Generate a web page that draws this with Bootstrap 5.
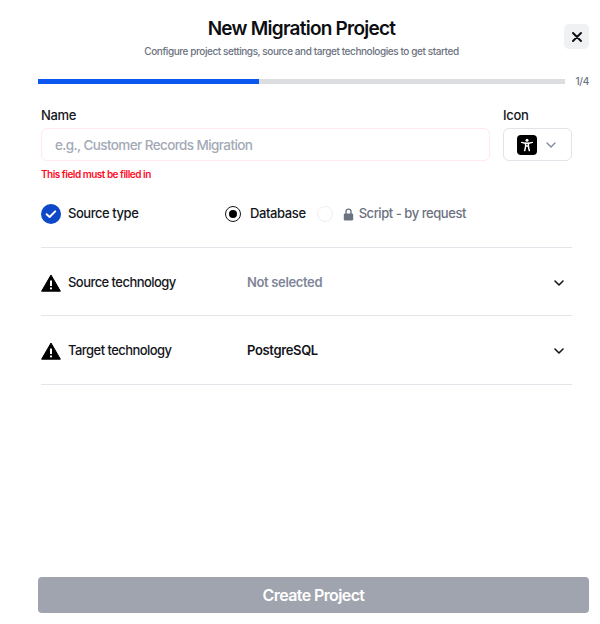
<!DOCTYPE html>
<html lang="en">
<head>
  <meta charset="UTF-8" />
  <meta name="viewport" content="width=device-width, initial-scale=1.0" />
  <title>New Migration Project</title>
  <link href="https://cdn.jsdelivr.net/npm/bootstrap@5.3.0/dist/css/bootstrap.min.css" rel="stylesheet" />
  <style>
    html, body { height: 100%; }
    body { font-family: Inter, "Liberation Sans", sans-serif; color: #14161b; background: #fff; overflow: hidden; }
    .project-page { height: 624px; padding: 0 11px 11px 38px; }
    .project-head { height: 74px; padding: 17px 24px 0 0; }
    .project-title { font-size: 19px; font-weight: 600; line-height: 24px; letter-spacing: -0.75px; margin: 0; color: #0c0e12; }
    .project-sub { font-size: 10px; font-weight: 500; line-height: 14px; margin: 3px 0 0; color: #6b7280; letter-spacing: -0.42px; }
    .close-btn { top: 24px; right: 11px; width: 25px; height: 25px; background: #f0f1f3; border: 0; border-radius: 5px; padding: 0; }
    .step-row { height: 14px; }
    .step-track { height: 5px; background: #dcdde1; border-radius: 0; flex: 1 1 auto; }
    .step-track .progress-bar { background: #0b57f0; }
    .step-count { width: 24px; text-align: right; font-size: 10px; font-weight: 500; color: #6b7280; letter-spacing: -0.3px; }
    .project-form { padding: 0 17px 0 3px; }
    .name-block { margin-top: 19px; }
    .name-col { margin-right: 5px; }
    .field-label { font-size: 13px; font-weight: 500; line-height: 16px; margin: 0 0 5px; letter-spacing: -0.3px; }
    .name-input { height: 33px; border: 1px solid #ffe9ec; border-radius: 6px; font-size: 13.5px; font-weight: 500; padding: 0 13px; letter-spacing: -0.6px; }
    .name-input::placeholder { color: #a3a9b6; }
    .icon-pick { width: 69px; height: 33px; border: 1px solid #e2e4ea; border-radius: 6px; background: #fff; padding: 0 0 0 13px; }
    .icon-tile { width: 20px; height: 20px; background: #000; border-radius: 4px; }
    .icon-caret { margin-left: 1px; }
    .field-error { font-size: 10px; font-weight: 600; line-height: 14px; color: #ff0a1f; margin-top: 6px; letter-spacing: -0.5px; }
    .type-row { height: 67px; border-bottom: 1px solid #e4e5ea; }
    .row-label { font-size: 13px; font-weight: 500; letter-spacing: -0.45px; width: 164px; padding-left: 7px; }
    .radio-on, .radio-off { width: 16px; height: 16px; border-radius: 50%; flex: none; }
    .radio-on { border: 1.5px solid #14161b; padding: 2.5px; }
    .radio-on span { display: block; width: 8px; height: 8px; border-radius: 50%; background: #000; }
    .radio-off { border: 1px solid #eceef1; margin-left: 11px; }
    .radio-text { font-size: 13px; font-weight: 500; letter-spacing: -0.4px; margin-left: 9px; }
    .radio-text.locked { color: #6b7280; margin-left: 5px; letter-spacing: -0.45px; }
    .lock-glyph { margin-left: 10px; }
    .tech-row { height: 68px; border-bottom: 1px solid #e4e5ea; padding-top: 2px; }
    .tech-row + .tech-row { height: 69px; }
    .tech-name { width: 186px; font-size: 13px; font-weight: 500; letter-spacing: -0.55px; padding-left: 7px; }
    .tech-value { font-size: 13px; font-weight: 600; letter-spacing: -0.35px; }
    .tech-value.empty { color: #80869a; }
    .create-btn { height: 36px; background: #9fa4af; border: 0; border-radius: 4px; color: #fff; font-size: 16px; font-weight: 600; letter-spacing: -0.6px; }
    .create-btn:disabled { background: #9fa4af; color: #fff; opacity: 1; }
  </style>
</head>
<body>
  <div class="project-page d-flex flex-column position-relative">
    <div class="project-head text-center">
      <h1 class="project-title">New Migration Project</h1>
      <p class="project-sub">Configure project settings, source and target technologies to get started</p>
      <button class="close-btn position-absolute d-flex align-items-center justify-content-center" type="button" aria-label="Close">
        <svg width="10" height="10" viewBox="0 0 10 10"><path d="M1 1l8 8M9 1l-8 8" stroke="#0c0e12" stroke-width="1.9" stroke-linecap="round"/></svg>
      </button>
    </div>

    <div class="step-row d-flex align-items-center">
      <div class="progress step-track">
        <div class="progress-bar" style="width: 42%"></div>
      </div>
      <div class="step-count">1/4</div>
    </div>

    <form class="project-form flex-grow-1 d-flex flex-column">
      <div class="name-block d-flex gap-2 justify-content-between">
        <div class="name-col flex-grow-1">
          <label class="field-label d-block">Name</label>
          <input type="text" class="form-control name-input" placeholder="e.g., Customer Records Migration" />
          <div class="field-error">This field must be filled in</div>
        </div>
        <div>
          <label class="field-label d-block">Icon</label>
          <button type="button" class="icon-pick d-flex align-items-center gap-2">
            <span class="icon-tile d-flex align-items-center justify-content-center">
              <svg width="14" height="14" viewBox="0 0 14 14"><circle cx="7" cy="2.2" r="1.5" fill="#fff"/><path d="M1.6 4.4l3.6.9h3.6l3.6-.9" stroke="#fff" stroke-width="1.4" stroke-linecap="round" fill="none"/><path d="M5.6 5.2v3.2L4.7 12.6M8.4 5.2v3.2l.9 4.2M5.6 8h2.8" stroke="#fff" stroke-width="1.5" stroke-linecap="round" fill="none"/></svg>
            </span>
            <svg class="icon-caret" width="10" height="6" viewBox="0 0 10 6"><path d="M1 1l4 4 4-4" stroke="#80869a" stroke-width="1.3" fill="none" stroke-linecap="round" stroke-linejoin="round"/></svg>
          </button>
        </div>
      </div>

      <div class="type-row d-flex align-items-center">
        <svg width="20" height="20" viewBox="0 0 20 20"><circle cx="10" cy="10" r="10" fill="#0f47c9"/><path d="M5.6 10.2l3 2.8 5.6-5.6" stroke="#fff" stroke-width="2" fill="none" stroke-linecap="round" stroke-linejoin="round"/></svg>
        <div class="row-label">Source type</div>
        <div class="d-flex align-items-center">
          <span class="radio-on"><span></span></span>
          <span class="radio-text">Database</span>
          <span class="radio-off"></span>
          <svg class="lock-glyph" width="11" height="13" viewBox="0 0 11 13"><path d="M3 6V3.6a2.5 2.5 0 0 1 5 0V6" stroke="#6b7280" stroke-width="1.4" fill="none"/><rect x="0.8" y="5.4" width="9.4" height="7.2" rx="1.4" fill="#6b7280"/></svg>
          <span class="radio-text locked">Script - by request</span>
        </div>
      </div>

      <div class="tech-row d-flex align-items-center">
        <svg width="20" height="18" viewBox="0 0 20 18"><path d="M10 1L19.4 17.2H.6z" fill="#000" stroke="#000" stroke-linejoin="round"/><path d="M10 6.5v5.5" stroke="#fff" stroke-width="2"/><circle cx="10" cy="14.4" r="1.1" fill="#fff"/></svg>
        <div class="tech-name">Source technology</div>
        <div class="tech-value empty flex-grow-1">Not selected</div>
        <svg class="me-2" width="10" height="6" viewBox="0 0 10 6"><path d="M1 1l4 4 4-4" stroke="#14161b" stroke-width="1.6" fill="none" stroke-linecap="round" stroke-linejoin="round"/></svg>
      </div>
      <div class="tech-row d-flex align-items-center">
        <svg width="20" height="18" viewBox="0 0 20 18"><path d="M10 1L19.4 17.2H.6z" fill="#000" stroke="#000" stroke-linejoin="round"/><path d="M10 6.5v5.5" stroke="#fff" stroke-width="2"/><circle cx="10" cy="14.4" r="1.1" fill="#fff"/></svg>
        <div class="tech-name">Target technology</div>
        <div class="tech-value flex-grow-1">PostgreSQL</div>
        <svg class="me-2" width="10" height="6" viewBox="0 0 10 6"><path d="M1 1l4 4 4-4" stroke="#14161b" stroke-width="1.6" fill="none" stroke-linecap="round" stroke-linejoin="round"/></svg>
      </div>
    </form>

    <button class="btn create-btn w-100 p-0" type="button" disabled>Create Project</button>
  </div>
</body>
</html>
